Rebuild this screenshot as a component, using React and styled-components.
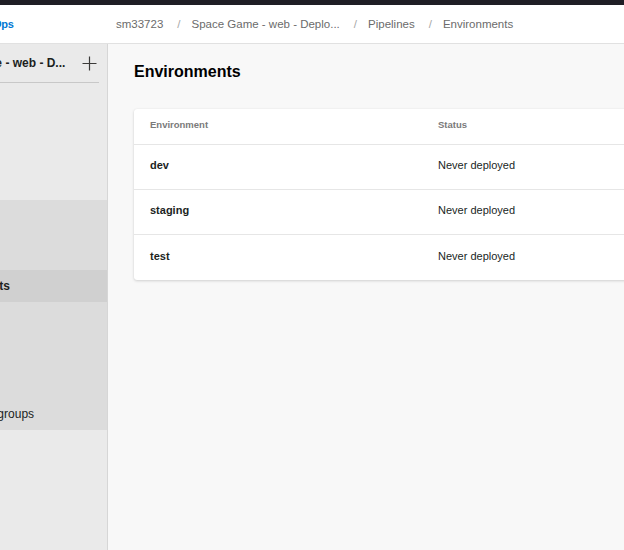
import React from "react";
import styled, { createGlobalStyle } from "styled-components";

const GlobalStyle = createGlobalStyle`
  html, body {
    margin: 0;
    padding: 0;
    height: 100%;
    overflow: hidden;
    background: #f8f8f8;
  }
  body {
    font-family: "Liberation Sans", Arial, sans-serif;
    color: #201f1e;
  }
  #root {
    height: 100%;
  }
`;

// the page is scrolled sideways: the left 150px of the app lie outside the window
const Frame = styled.div`
  display: flex;
  flex-direction: column;
  width: 1000px;
  height: 550px;
  margin-left: -150px;
`;

const TopStrip = styled.div`
  height: 5px;
  background: #1f1e25;
  flex-shrink: 0;
`;

const Header = styled.header`
  display: flex;
  align-items: center;
  height: 38px;
  background: #ffffff;
  border-bottom: 1px solid #e1e1e1;
  flex-shrink: 0;
`;

const LogoArea = styled.div`
  display: flex;
  align-items: center;
  gap: 6px;
  width: 266px;
  padding-left: 67px;
  box-sizing: border-box;
`;

const LogoText = styled.span`
  font-size: 11px;
  font-weight: 700;
  color: #0078d4;
  letter-spacing: -0.2px;
`;

const Crumbs = styled.nav`
  display: flex;
  align-items: center;
  font-size: 11.5px;
  color: #6b6b6b;
`;

const Crumb = styled.span`
  white-space: nowrap;
`;

const Sep = styled.span`
  color: #a6a6a6;
  margin: 0 11px 0 14px;
`;

const Body = styled.div`
  display: flex;
  flex: 1;
  min-height: 0;
`;

const Sidebar = styled.aside`
  width: 257px;
  flex-shrink: 0;
  background: #eaeaea;
  border-right: 1px solid #d6d6d6;
  display: flex;
  flex-direction: column;
`;

const ProjectHeader = styled.div`
  display: flex;
  align-items: center;
  height: 38px;
  margin: 0 8px;
  padding: 0 0 0 15px;
  border-bottom: 1px solid #c8c8c8;
`;

const Avatar = styled.div`
  width: 32px;
  height: 32px;
  border-radius: 2px;
  background: #c7519a;
  margin-right: 25px;
  flex-shrink: 0;
`;

const ProjectName = styled.span`
  flex: 1;
  font-size: 12px;
  font-weight: 700;
  white-space: nowrap;
  color: #201f1e;
`;

const PlusButton = styled.span`
  display: flex;
  align-items: center;
  justify-content: center;
  width: 20px;
  height: 24px;
`;

const Nav = styled.div`
  display: flex;
  flex-direction: column;
`;

const NavItem = styled.div`
  display: flex;
  align-items: center;
  height: ${(p) => (p.$top ? "39px" : "32px")};
  padding-left: 80px;
  font-size: 12px;
  font-weight: ${(p) => (p.$selected ? 700 : 400)};
  color: #201f1e;
  background: ${(p) => (p.$selected ? "#d0d0d0" : "transparent")};
  white-space: nowrap;
`;

const Group = styled.div`
  display: flex;
  flex-direction: column;
  background: #dcdcdc;
  padding-top: 6px;
`;

const Main = styled.main`
  flex: 1;
  padding: 18px 26px 0;
  background: #f8f8f8;
`;

const Title = styled.h1`
  margin: 0 0 27px;
  font-size: 16px;
  font-weight: 700;
  line-height: 20px;
  color: #000;
`;

const Card = styled.section`
  background: #ffffff;
  border-radius: 3px;
  box-shadow: 0 1px 3px rgba(0, 0, 0, 0.16), 0 0 1px rgba(0, 0, 0, 0.08);
`;

const Row = styled.div`
  display: grid;
  grid-template-columns: 288px 1fr;
  align-items: center;
  height: ${(p) => (p.$head ? "36px" : "45px")};
  padding: 0 0 4px 16px;
  border-bottom: ${(p) => (p.$last ? "none" : "1px solid #e6e6e6")};
  box-sizing: border-box;
`;

const HeadCell = styled.span`
  font-size: 9.5px;
  font-weight: 700;
  color: #7a7a7a;
`;

const NameCell = styled.span`
  font-size: 11px;
  font-weight: 700;
  color: #201f1e;
`;

const StatusCell = styled.span`
  font-size: 11px;
  color: #201f1e;
`;

const environments = [
  { name: "dev", status: "Never deployed" },
  { name: "staging", status: "Never deployed" },
  { name: "test", status: "Never deployed" },
];

const Plus = () => (
  <svg width="15" height="15" viewBox="0 0 15 15">
    <path d="M7.5 0.5v14M0.5 7.5h14" stroke="#3b3a39" strokeWidth="1.2" fill="none" />
  </svg>
);

const DevOpsLogo = () => (
  <svg width="18" height="18" viewBox="0 0 18 18">
    <path d="M17 3.6v10.4l-4.3 3.5-6.6-2.4v2.4L2.3 12.5l10.7.9V4.1L17 3.6zM13.5 4.1L7.5 0.5v2.4L1.9 4.5 0.5 6.3v4.1l2.4 1V5.1l10.6-1z" fill="#0078d4" />
  </svg>
);

export default function App() {
  return (
    <>
      <GlobalStyle />
      <Frame>
        <TopStrip />
        <Header>
          <LogoArea>
            <DevOpsLogo />
            <LogoText>Azure DevOps</LogoText>
          </LogoArea>
          <Crumbs>
            <Crumb>sm33723</Crumb>
            <Sep>/</Sep>
            <Crumb>Space Game - web - Deplo...</Crumb>
            <Sep>/</Sep>
            <Crumb>Pipelines</Crumb>
            <Sep>/</Sep>
            <Crumb>Environments</Crumb>
          </Crumbs>
        </Header>
        <Body>
          <Sidebar>
            <ProjectHeader>
              <Avatar />
              <ProjectName>Space Game - web - D...</ProjectName>
              <PlusButton>
                <Plus />
              </PlusButton>
            </ProjectHeader>
            <Nav>
              <NavItem $top>Overview</NavItem>
              <NavItem $top>Boards</NavItem>
              <NavItem $top>Repos</NavItem>
              <Group>
                <NavItem>Pipelines</NavItem>
                <NavItem>Pipelines</NavItem>
                <NavItem $selected>Environments</NavItem>
                <NavItem>Releases</NavItem>
                <NavItem>Library</NavItem>
                <NavItem>Task groups</NavItem>
                <NavItem>Deployment groups</NavItem>
              </Group>
            </Nav>
          </Sidebar>
          <Main>
            <Title>Environments</Title>
            <Card>
              <Row $head>
                <HeadCell>Environment</HeadCell>
                <HeadCell>Status</HeadCell>
              </Row>
              {environments.map((env, i) => (
                <Row key={env.name} $last={i === environments.length - 1}>
                  <NameCell>{env.name}</NameCell>
                  <StatusCell>{env.status}</StatusCell>
                </Row>
              ))}
            </Card>
          </Main>
        </Body>
      </Frame>
    </>
  );
}
